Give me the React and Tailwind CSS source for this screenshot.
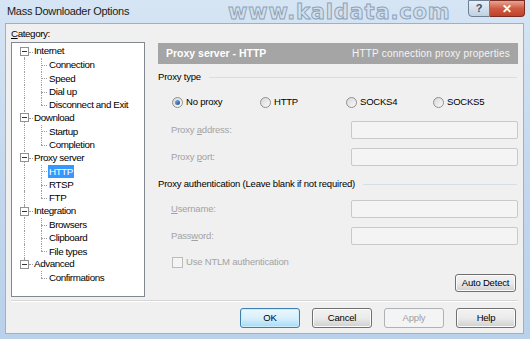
import React from "react";

const TREE = [
  { label: "Internet", level: 0 },
  { label: "Connection", level: 1 },
  { label: "Speed", level: 1 },
  { label: "Dial up", level: 1 },
  { label: "Disconnect and Exit", level: 1, lastChild: true },
  { label: "Download", level: 0 },
  { label: "Startup", level: 1 },
  { label: "Completion", level: 1, lastChild: true },
  { label: "Proxy server", level: 0 },
  { label: "HTTP", level: 1, selected: true },
  { label: "RTSP", level: 1 },
  { label: "FTP", level: 1, lastChild: true },
  { label: "Integration", level: 0 },
  { label: "Browsers", level: 1 },
  { label: "Clipboard", level: 1 },
  { label: "File types", level: 1, lastChild: true },
  { label: "Advanced", level: 0, last: true },
  { label: "Confirmations", level: 1, lastChild: true, underLast: true },
];

function TreeRow({ item, first }) {
  const dot = "border-dotted border-[#a0a0a0]";
  return (
    <div className="relative h-[13.3px] flex items-center">
      {!item.underLast && item.level === 1 && (
        <span className={`absolute left-[12px] top-0 h-full border-l ${dot}`} />
      )}
      {item.level === 0 && (
        <>
          {!first && <span className={`absolute left-[12px] top-0 h-1/2 border-l ${dot}`} />}
          {!item.last && <span className={`absolute left-[12px] top-1/2 h-1/2 border-l ${dot}`} />}
          <span className="absolute left-[8px] top-[2px] w-[9px] h-[9px] border border-[#919191] bg-white flex items-center justify-center">
            <span className="w-[5px] h-px bg-[#333]" />
          </span>
          <span className={`absolute left-[17px] top-1/2 w-[4px] border-t ${dot}`} />
          <span className="ml-[22px] text-black">{item.label}</span>
        </>
      )}
      {item.level === 1 && (
        <>
          <span className={`absolute left-[29px] top-0 ${item.lastChild ? "h-1/2" : "h-full"} border-l ${dot}`} />
          <span className={`absolute left-[29px] top-1/2 w-[6px] border-t ${dot}`} />
          <span
            className={`ml-[36px] px-[1px] leading-[13px] ${
              item.selected ? "bg-[#3399ff] text-white" : "text-black"
            }`}
          >
            {item.label}
          </span>
        </>
      )}
    </div>
  );
}

function Radio({ checked, label }) {
  return (
    <div className="flex items-center gap-[3px]">
      <span className="w-[11px] h-[11px] rounded-full border border-[#8f8f8f] bg-gradient-to-br from-[#d8d8d8] to-[#fafafa] flex items-center justify-center">
        {checked && (
          <span className="w-[5px] h-[5px] rounded-full bg-gradient-to-br from-[#7fb3e8] to-[#1a4f8a]" />
        )}
      </span>
      <span className="text-black">{label}</span>
    </div>
  );
}

function Field({ label }) {
  return (
    <div className="flex items-center h-[18px] pl-[13px]">
      <span className="flex-1 text-[#a3a3a3]">{label}</span>
      <div className="w-[167px] h-full border border-[#c9c9c9] rounded-[2px] bg-[#f4f4f4]" />
    </div>
  );
}

function GroupTitle({ children }) {
  return (
    <div className="flex items-center h-[14px] gap-[8px]">
      <span className="text-black whitespace-nowrap">{children}</span>
      <div className="flex-1 border-t border-[#d5dfe5] mr-[1px]" />
    </div>
  );
}

function Btn({ children, variant }) {
  const base =
    "w-[60px] h-[20px] rounded-[3px] flex items-center justify-center border whitespace-nowrap";
  if (variant === "default")
    return (
      <div className={`${base} border-[#3c7fb1] bg-gradient-to-b from-[#eaf6fd] via-[#d9f0fc] to-[#a7d9f5] text-black shadow-[inset_0_0_0_1px_#cbeefc]`}>
        {children}
      </div>
    );
  if (variant === "disabled")
    return (
      <div className={`${base} border-[#adb2b5] bg-[#f4f4f4] text-[#a0a0a0]`}>{children}</div>
    );
  return (
    <div className={`${base} border-[#707070] bg-gradient-to-b from-[#f2f2f2] via-[#ebebeb] to-[#cfcfcf] text-black shadow-[inset_0_0_0_1px_#fbfbfb]`}>
      {children}
    </div>
  );
}

export default function App() {
  return (
    <div
      className="relative w-[530px] h-[339px] overflow-hidden bg-gradient-to-b from-[#d6e5f4] via-[#c4d8ee] to-[#b9d1ea] text-[9.5px] tracking-[-0.2px]"
      style={{ fontFamily: "'Liberation Sans', Arial, sans-serif" }}
    >
      {/* title bar */}
      <div className="h-[23px] flex items-center pl-[7px] relative">
        <span className="text-[11px] tracking-[-0.3px] text-[#1b1b1b]">
          Mass Downloader Options
        </span>
        <span
          className="absolute left-[228px] top-[-3px] text-[21px] font-bold tracking-[0.8px] text-[#d3e0ec] [-webkit-text-stroke:1px_#8ea3b9]"
          style={{ fontFamily: "'DejaVu Sans', sans-serif" }}
        >
          www.kaldata.com
        </span>
        <div className="absolute right-[5px] top-0 flex">
          <div className="w-[22px] h-[17px] rounded-bl-[4px] border border-[#6d7f95] bg-gradient-to-b from-[#e8eff7] to-[#c0d0e2] flex items-center justify-center text-[11px] font-bold text-[#3c4f66]">
            ?
          </div>
          <div className="w-[35px] h-[17px] rounded-br-[4px] border border-l-0 border-[#7a2d22] bg-gradient-to-b from-[#e6a594] via-[#cf5a43] to-[#c0412a] flex items-center justify-center text-[12px] font-bold text-white">
            ✕
          </div>
        </div>
      </div>

      {/* client area */}
      <div className="mx-[5px] mr-[6px] h-[311px] bg-[#f0f0f0] border border-[#9bb1c9] px-[5px] flex flex-col">
        <div className="flex gap-[13px] pt-[2px]">
          {/* left column */}
          <div className="w-[134px] flex flex-col text-[9.8px] tracking-[-0.4px]">
            <div className="h-[16px] flex items-center text-black">
              <span><u>C</u>ategory:</span>
            </div>
            <div className="h-[255px] border border-[#828790] bg-white pt-[2px]">
              {TREE.map((it, i) => (
                <TreeRow key={i} item={it} first={i === 0} />
              ))}
            </div>
          </div>

          {/* right column */}
          <div className="flex-1 flex flex-col pt-[17px]">
            <div className="h-[21px] bg-[#a5a5a5] flex items-center justify-between px-[8px]">
              <span className="font-bold text-white text-[10.5px] tracking-normal">Proxy server - HTTP</span>
              <span className="text-[#f4f4f4] text-[10px] tracking-[0.2px]">HTTP connection proxy properties</span>
            </div>
            <div className="mt-[6px]">
              <GroupTitle>Proxy type</GroupTitle>
            </div>
            <div className="mt-[11px] h-[14px] pl-[14px] grid grid-cols-[88px_86px_87px_auto] items-center">
              <Radio checked label="No proxy" />
              <Radio label="HTTP" />
              <Radio label="SOCKS4" />
              <Radio label="SOCKS5" />
            </div>
            <div className="mt-[12px]">
              <Field label={<>Proxy <u>a</u>ddress:</>} />
            </div>
            <div className="mt-[9px]">
              <Field label={<>Proxy <u>p</u>ort:</>} />
            </div>
            <div className="mt-[11px]">
              <GroupTitle>Proxy authentication (Leave blank if not required)</GroupTitle>
            </div>
            <div className="mt-[9px]">
              <Field label={<><u>U</u>sername:</>} />
            </div>
            <div className="mt-[9px]">
              <Field label={<>Pass<u>w</u>ord:</>} />
            </div>
            <div className="mt-[10px] h-[14px] pl-[14px] flex items-center gap-[3px]">
              <span className="w-[11px] h-[11px] border border-[#bcbcbc] bg-[#f4f4f4]" />
              <span className="text-[#a3a3a3]">Use NTLM authentication</span>
            </div>
            <div className="mt-[5px] flex justify-end pr-[2px]">
              <div className="w-[61px] h-[18px] rounded-[3px] border border-[#707070] bg-gradient-to-b from-[#f2f2f2] via-[#ebebeb] to-[#cfcfcf] flex items-center justify-center text-black whitespace-nowrap shadow-[inset_0_0_0_1px_#fbfbfb]">
                Auto Detect
              </div>
            </div>
          </div>
        </div>

        {/* separator */}
        <div className="mt-[3px] border-t border-[#d5d5d5] border-b border-b-white" />

        {/* buttons */}
        <div className="mt-[6px] flex justify-end gap-[12px] pr-[2px]">
          <Btn variant="default">OK</Btn>
          <Btn>Cancel</Btn>
          <Btn variant="disabled">Apply</Btn>
          <Btn>Help</Btn>
        </div>
      </div>
    </div>
  );
}
